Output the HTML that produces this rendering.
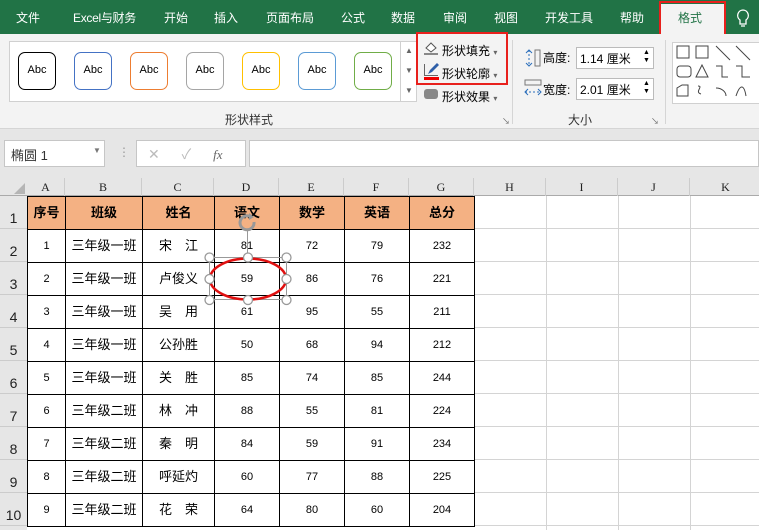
<!DOCTYPE html>
<html><head><meta charset="utf-8"><style>
*{margin:0;padding:0;box-sizing:border-box}
body{width:759px;height:530px;overflow:hidden;background:#fff;font-family:"Liberation Sans","Noto Sans CJK SC",sans-serif;position:relative}
.a{position:absolute;white-space:nowrap}
.tab{position:absolute;top:10px;color:#fff;font-size:12px;line-height:16px}
.abc{position:absolute;top:52px;width:38px;height:38px;border:1.5px solid;border-radius:7px;font-size:11px;text-align:center;line-height:35px;color:#000;background:#fff}
.ch{position:absolute;top:178px;height:18px;text-align:center;font-family:"Liberation Serif","Noto Serif CJK SC",serif;font-size:12px;line-height:18px;color:#222;border-right:1px solid #ccc}
.rh{position:absolute;left:0;width:27px;background:#e6e6e6;border-bottom:1px solid #ccc;font-size:14px;font-family:"Liberation Sans",sans-serif;color:#222;text-align:center}
td{border:1.4px solid #000;text-align:center;font-size:11px;height:33px;padding:0;line-height:14px}
</style></head><body>
<div class="a" style="left:0;top:0;width:759px;height:34px;background:#217346"></div>
<div class="tab" style="left:16px">文件</div>
<div class="tab" style="left:73px;letter-spacing:-0.3px">Excel与财务</div>
<div class="tab" style="left:164px">开始</div>
<div class="tab" style="left:214px">插入</div>
<div class="tab" style="left:266px">页面布局</div>
<div class="tab" style="left:341px">公式</div>
<div class="tab" style="left:391px">数据</div>
<div class="tab" style="left:443px">审阅</div>
<div class="tab" style="left:494px">视图</div>
<div class="tab" style="left:545px">开发工具</div>
<div class="tab" style="left:620px">帮助</div>
<div class="a" style="left:660px;top:4px;width:64px;height:32px;background:#f3f3f3"></div>
<div class="tab" style="left:678px;color:#217346">格式</div>
<div class="a" style="left:659px;top:1px;width:67px;height:44px;border:2.5px solid #e8201c"></div>
<svg class="a" style="left:736px;top:9px" width="14" height="20" viewBox="0 0 14 20"><path d="M7 1a5.5 5.5 0 0 0-3 10v4h6v-4a5.5 5.5 0 0 0-3-10zM5 17h4" fill="none" stroke="#fff" stroke-width="1.3"/></svg>
<div class="a" style="left:0;top:34px;width:759px;height:95px;background:#f3f3f3;border-bottom:1px solid #d5d5d5"></div>
<div class="a" style="left:9px;top:41px;width:408px;height:61px;background:#fff;border:1px solid #d0d0d0"></div>
<div class="a" style="left:400px;top:41px;width:17px;height:61px;border-left:1px solid #d0d0d0;font-size:8px;color:#666;text-align:center;line-height:20px">▲<br>▼<br>▼</div>
<div class="abc" style="left:18px;border-color:#000">Abc</div>
<div class="abc" style="left:74px;border-color:#4472c4">Abc</div>
<div class="abc" style="left:130px;border-color:#ed7d31">Abc</div>
<div class="abc" style="left:186px;border-color:#a5a5a5">Abc</div>
<div class="abc" style="left:242px;border-color:#ffc000">Abc</div>
<div class="abc" style="left:298px;border-color:#5b9bd5">Abc</div>
<div class="abc" style="left:354px;border-color:#70ad47">Abc</div>
<svg class="a" style="left:423px;top:40px" width="16" height="16"><path d="M3 8l5-5 5 5-5 4z" fill="#fff" stroke="#555"/><path d="M1 14h14" stroke="#888" stroke-width="2"/></svg>
<div class="a" style="left:442px;top:42px;font-size:12px">形状填充 <span style="font-size:8px;color:#666">▾</span></div>
<div class="a" style="left:424px;top:64px;width:14px;height:12px;border-left:1px solid #666;border-bottom:1px solid #666"></div>
<svg class="a" style="left:426px;top:62px" width="14" height="14"><path d="M2 12l2-4 7-7 2 2-7 7z" fill="#2f5fa8"/></svg>
<div class="a" style="left:424px;top:77px;width:15px;height:3px;background:#e00"></div>
<div class="a" style="left:442px;top:65px;font-size:12px">形状轮廓 <span style="font-size:8px;color:#666">▾</span></div>
<div class="a" style="left:424px;top:89px;width:14px;height:10px;background:#888;border-radius:3px"></div>
<div class="a" style="left:442px;top:88px;font-size:12px">形状效果 <span style="font-size:8px;color:#666">▾</span></div>
<div class="a" style="left:416px;top:32px;width:92px;height:53px;border:2.5px solid #e8201c"></div>
<div class="a" style="left:225px;top:111px;font-size:12px;color:#333">形状样式</div>
<div class="a" style="left:512px;top:40px;width:1px;height:84px;background:#d5d5d5"></div>
<div class="a" style="left:665px;top:40px;width:1px;height:84px;background:#d5d5d5"></div>
<div class="a" style="left:502px;top:116px;font-size:8px;color:#666">↘</div>
<div class="a" style="left:651px;top:116px;font-size:8px;color:#666">↘</div>
<svg class="a" style="left:524px;top:48px" width="18" height="20"><path d="M5 2v16" stroke="#2a6ebb" stroke-dasharray="2 2"/><path d="M2 5l3-3 3 3M2 15l3 3 3-3" fill="none" stroke="#2a6ebb"/><rect x="11" y="2" width="5" height="16" fill="none" stroke="#777"/></svg>
<div class="a" style="left:543px;top:49px;font-size:12px">高度:</div>
<div class="a" style="left:576px;top:47px;width:78px;height:22px;background:#fff;border:1px solid #bbb;font-size:12px;padding:2px 3px">1.14 厘米</div>
<div class="a" style="left:643px;top:49px;font-size:7px;line-height:8px">▲<br>▼</div>
<svg class="a" style="left:523px;top:78px" width="20" height="20"><rect x="2" y="2" width="16" height="5" fill="none" stroke="#777"/><path d="M2 14h16" stroke="#2a6ebb" stroke-dasharray="2 2"/><path d="M5 11l-3 3 3 3M15 11l3 3-3 3" fill="none" stroke="#2a6ebb"/></svg>
<div class="a" style="left:543px;top:81px;font-size:12px">宽度:</div>
<div class="a" style="left:576px;top:78px;width:78px;height:22px;background:#fff;border:1px solid #bbb;font-size:12px;padding:2px 3px">2.01 厘米</div>
<div class="a" style="left:643px;top:80px;font-size:7px;line-height:8px">▲<br>▼</div>
<div class="a" style="left:568px;top:111px;font-size:12px;color:#333">大小</div>
<div class="a" style="left:672px;top:42px;width:90px;height:62px;background:#fff;border:1px solid #d0d0d0"></div>
<svg class="a" style="left:676px;top:44px" width="83" height="58" viewBox="0 0 83 58" fill="none" stroke="#444" stroke-width="1"><rect x="1" y="2" width="12" height="12"/><rect x="20" y="2" width="12" height="12"/><path d="M40 2l14 14M60 2l14 14"/><rect x="1" y="22" width="14" height="11" rx="3"/><path d="M20 33l6-12 6 12z M40 22h6v11h6 M60 22h6v11h8"/><path d="M1 52v-8l5-3h6v11z M22 42c6 0 -4 6 3 8 M40 44c6 0 10 4 10 8 M60 52c4-12 8-12 10 0"/></svg>
<div class="a" style="left:0;top:129px;width:759px;height:49px;background:#e6e6e6"></div>
<div class="a" style="left:4px;top:140px;width:101px;height:27px;background:#fff;border:1px solid #c6c6c6;font-size:13px;padding:4px 6px;color:#333">椭圆 1<span style="position:absolute;left:88px;top:5px;font-size:8px;color:#777">▼</span></div>
<div class="a" style="left:118px;top:145px;font-size:12px;color:#999">⋮</div>
<div class="a" style="left:136px;top:140px;width:110px;height:27px;background:#fff;border:1px solid #c6c6c6;color:#bbb;font-size:14px;padding:3px 11px;word-spacing:18px">✕ ✓ <i style="font-family:'Liberation Serif';color:#666;font-size:13px">fx</i></div>
<div class="a" style="left:249px;top:140px;width:510px;height:27px;background:#fff;border:1px solid #c6c6c6"></div>
<div class="a" style="left:0;top:178px;width:759px;height:18px;background:#e6e6e6;border-bottom:1px solid #aaa"></div>
<div class="a" style="left:14px;top:183px;width:0;height:0;border-left:11px solid transparent;border-bottom:11px solid #b5b5b5"></div>
<div class="ch" style="left:27px;width:38px">A</div>
<div class="ch" style="left:65px;width:77px">B</div>
<div class="ch" style="left:142px;width:72px">C</div>
<div class="ch" style="left:214px;width:65px">D</div>
<div class="ch" style="left:279px;width:65px">E</div>
<div class="ch" style="left:344px;width:65px">F</div>
<div class="ch" style="left:409px;width:65px">G</div>
<div class="ch" style="left:474px;width:72px">H</div>
<div class="ch" style="left:546px;width:72px">I</div>
<div class="ch" style="left:618px;width:72px">J</div>
<div class="ch" style="left:690px;width:72px">K</div>
<div class="a" style="left:0;top:196px;width:27px;height:334px;background:#e6e6e6"></div>
<svg class="a" style="left:27px;top:196px" width="732" height="334"><g stroke="#d4d4d4" stroke-width="1"><path d="M519.5 0v334M591.5 0v334M663.5 0v334M447 32.5h285M447 65.5h285M447 98.5h285M447 131.5h285M447 164.5h285M447 197.5h285M447 230.5h285M447 263.5h285M447 296.5h285M447 329.5h285"/></g></svg>
<div class="rh" style="top:196px;height:33px;padding-top:14px">1</div>
<div class="rh" style="top:229px;height:33px;padding-top:14px">2</div>
<div class="rh" style="top:262px;height:33px;padding-top:14px">3</div>
<div class="rh" style="top:295px;height:33px;padding-top:14px">4</div>
<div class="rh" style="top:328px;height:33px;padding-top:14px">5</div>
<div class="rh" style="top:361px;height:33px;padding-top:14px">6</div>
<div class="rh" style="top:394px;height:33px;padding-top:14px">7</div>
<div class="rh" style="top:427px;height:33px;padding-top:14px">8</div>
<div class="rh" style="top:460px;height:33px;padding-top:14px">9</div>
<div class="rh" style="top:493px;height:33px;padding-top:14px">10</div>
<table class="a" style="left:27px;top:196px;border-collapse:collapse;width:448px;table-layout:fixed">
<col style="width:38px"><col style="width:77px"><col style="width:72px"><col style="width:65px"><col style="width:65px"><col style="width:65px"><col style="width:65px">
<tr style="background:#f4b183;font-weight:bold;font-size:13px"><td style="font-size:13px">序号</td><td style="font-size:13px">班级</td><td style="font-size:13px">姓名</td><td style="font-size:13px">语文</td><td style="font-size:13px">数学</td><td style="font-size:13px">英语</td><td style="font-size:13px">总分</td></tr>
<tr><td>1</td><td style="font-size:13px">三年级一班</td><td style="font-size:13px">宋　江</td><td>81</td><td>72</td><td>79</td><td>232</td></tr>
<tr><td>2</td><td style="font-size:13px">三年级一班</td><td style="font-size:13px">卢俊义</td><td>59</td><td>86</td><td>76</td><td>221</td></tr>
<tr><td>3</td><td style="font-size:13px">三年级一班</td><td style="font-size:13px">吴　用</td><td>61</td><td>95</td><td>55</td><td>211</td></tr>
<tr><td>4</td><td style="font-size:13px">三年级一班</td><td style="font-size:13px">公孙胜</td><td>50</td><td>68</td><td>94</td><td>212</td></tr>
<tr><td>5</td><td style="font-size:13px">三年级一班</td><td style="font-size:13px">关　胜</td><td>85</td><td>74</td><td>85</td><td>244</td></tr>
<tr><td>6</td><td style="font-size:13px">三年级二班</td><td style="font-size:13px">林　冲</td><td>88</td><td>55</td><td>81</td><td>224</td></tr>
<tr><td>7</td><td style="font-size:13px">三年级二班</td><td style="font-size:13px">秦　明</td><td>84</td><td>59</td><td>91</td><td>234</td></tr>
<tr><td>8</td><td style="font-size:13px">三年级二班</td><td style="font-size:13px">呼延灼</td><td>60</td><td>77</td><td>88</td><td>225</td></tr>
<tr><td>9</td><td style="font-size:13px">三年级二班</td><td style="font-size:13px">花　荣</td><td>64</td><td>80</td><td>60</td><td>204</td></tr>
</table>
<svg class="a" style="left:200px;top:210px" width="100" height="100" viewBox="200 210 100 100">
<rect x="209.5" y="257.5" width="77" height="42" fill="none" stroke="#999"/>
<line x1="247.5" y1="230" x2="247.5" y2="257" stroke="#999"/>
<ellipse cx="248" cy="279" rx="38" ry="20.5" fill="none" stroke="#e01010" stroke-width="2.5"/>
<g fill="#fff" stroke="#999" stroke-width="1.3"><circle cx="209.5" cy="257.5" r="4.5"/><circle cx="248" cy="257.5" r="4.5"/><circle cx="286.5" cy="257.5" r="4.5"/><circle cx="209.5" cy="279" r="4.5"/><circle cx="286.5" cy="279" r="4.5"/><circle cx="209.5" cy="300" r="4.5"/><circle cx="248" cy="300" r="4.5"/><circle cx="286.5" cy="300" r="4.5"/></g>
<path d="M254 222a7 7 0 1 1-3-5" fill="none" stroke="#999" stroke-width="3"/><path d="M249 213l5 4-5 3z" fill="#999"/>
</svg>
</body></html>
